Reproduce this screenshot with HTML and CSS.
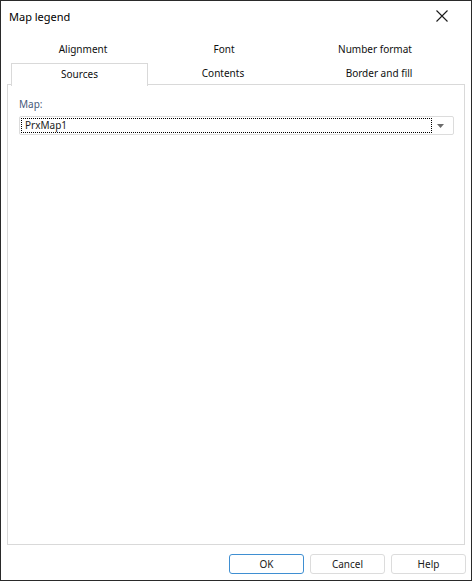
FILE: index.html
```html
<!DOCTYPE html>
<html>
<head>
<meta charset="utf-8">
<link rel="stylesheet" href="styles.css">
</head>
<body>
<div class="window">
  <div class="titlebar">
    <span class="title">Map legend</span>
    <svg class="close" width="12" height="12" viewBox="0 0 12 12"><path d="M0.5 0.5 L11.5 11.5 M11.5 0.5 L0.5 11.5" stroke="#1a1a1a" stroke-width="1.1" fill="none"/></svg>
  </div>
  <div class="tabs">
    <div class="tabrow row1">
      <div class="tab t1">Alignment</div>
      <div class="tab t2">Font</div>
      <div class="tab t3">Number format</div>
    </div>
    <div class="tabrow row2">
      <div class="tab s1 selected">Sources</div>
      <div class="tab s2">Contents</div>
      <div class="tab s3">Border and fill</div>
    </div>
  </div>
  <div class="panel">
    <div class="label">Map:</div>
    <div class="combo">
      <div class="focus">PrxMap1</div>
      <svg class="arrow" width="7" height="4" viewBox="0 0 7 4"><path d="M0 0 L7 0 L3.5 4 Z" fill="#6b6b6b"/></svg>
    </div>
  </div>
  <div class="footer">
    <button class="btn default">OK</button>
    <button class="btn">Cancel</button>
    <button class="btn">Help</button>
  </div>
</div>
</body>
</html>
```
FILE: styles.css
```css
html, body {
  margin: 0;
  padding: 0;
  background: #ffffff;
}
body {
  font-family: "Noto Sans", "Open Sans", sans-serif;
  font-size: 10px;
  color: #1a1a1a;
}
.window {
  width: 470px;
  height: 579px;
  border: 1px solid #2a2a2a;
  background: #ffffff;
  display: flex;
  flex-direction: column;
}
.titlebar {
  height: 30px;
  display: flex;
  align-items: center;
  justify-content: space-between;
  padding: 0 23px 0 8px;
}
.title {
  font-size: 11px;
  color: #000;
  margin-top: 1px;
}
.close {
  display: block;
}
.tabs {
  margin-top: 7px;
  display: flex;
  flex-direction: column;
  gap: 3px;
  position: relative;
  z-index: 1;
}
.tabrow {
  display: flex;
  height: 22px;
}
.tab {
  display: flex;
  align-items: center;
  justify-content: center;
  color: #0f0f0f;
  box-sizing: border-box;
}
.row1 { padding-left: 8px; }
.t1 { width: 148px; }
.t2 { width: 134px; }
.t3 { width: 168px; }
.row2 { padding-left: 10px; }
.s1 { width: 137px; }
.s2 { width: 150px; }
.s3 { width: 162px; }
.row2 .tab { padding-bottom: 2px; }
.selected {
  border: 1px solid #d9d9d9;
  border-bottom: none;
  background: #ffffff;
  height: 23px;
}
.panel {
  margin: -1px 6px 0 6px;
  height: 449px;
  border: 1px solid #d9d9d9;
  padding: 10px 10px 0 11px;
}
.label {
  color: #465a7a;
  height: 17px;
  line-height: 17px;
  margin-top: 1px;
}
.combo {
  margin-top: 3px;
  height: 17px;
  border: 1px solid #dcdcdc;
  border-radius: 2px;
  display: flex;
  align-items: center;
  padding: 0 9px 0 1px;
}
.focus {
  width: 406px;
  height: 13px;
  border: 1px dotted #000;
  line-height: 13px;
  padding-left: 3px;
  color: #1a1a1a;
}
.arrow {
  display: block;
  margin-left: auto;
  margin-top: 1px;
}
.footer {
  display: flex;
  justify-content: flex-end;
  gap: 6px;
  padding: 9px 5px 0 0;
}
.btn {
  width: 75px;
  height: 20px;
  border: 1px solid #dcdcdc;
  border-radius: 3px;
  background: #ffffff;
  font-family: "Noto Sans", "Open Sans", sans-serif;
  font-size: 10px;
  color: #1a1a1a;
  padding: 0;
  margin: 0;
}
.btn.default {
  border-color: #3f8fd2;
}
```
